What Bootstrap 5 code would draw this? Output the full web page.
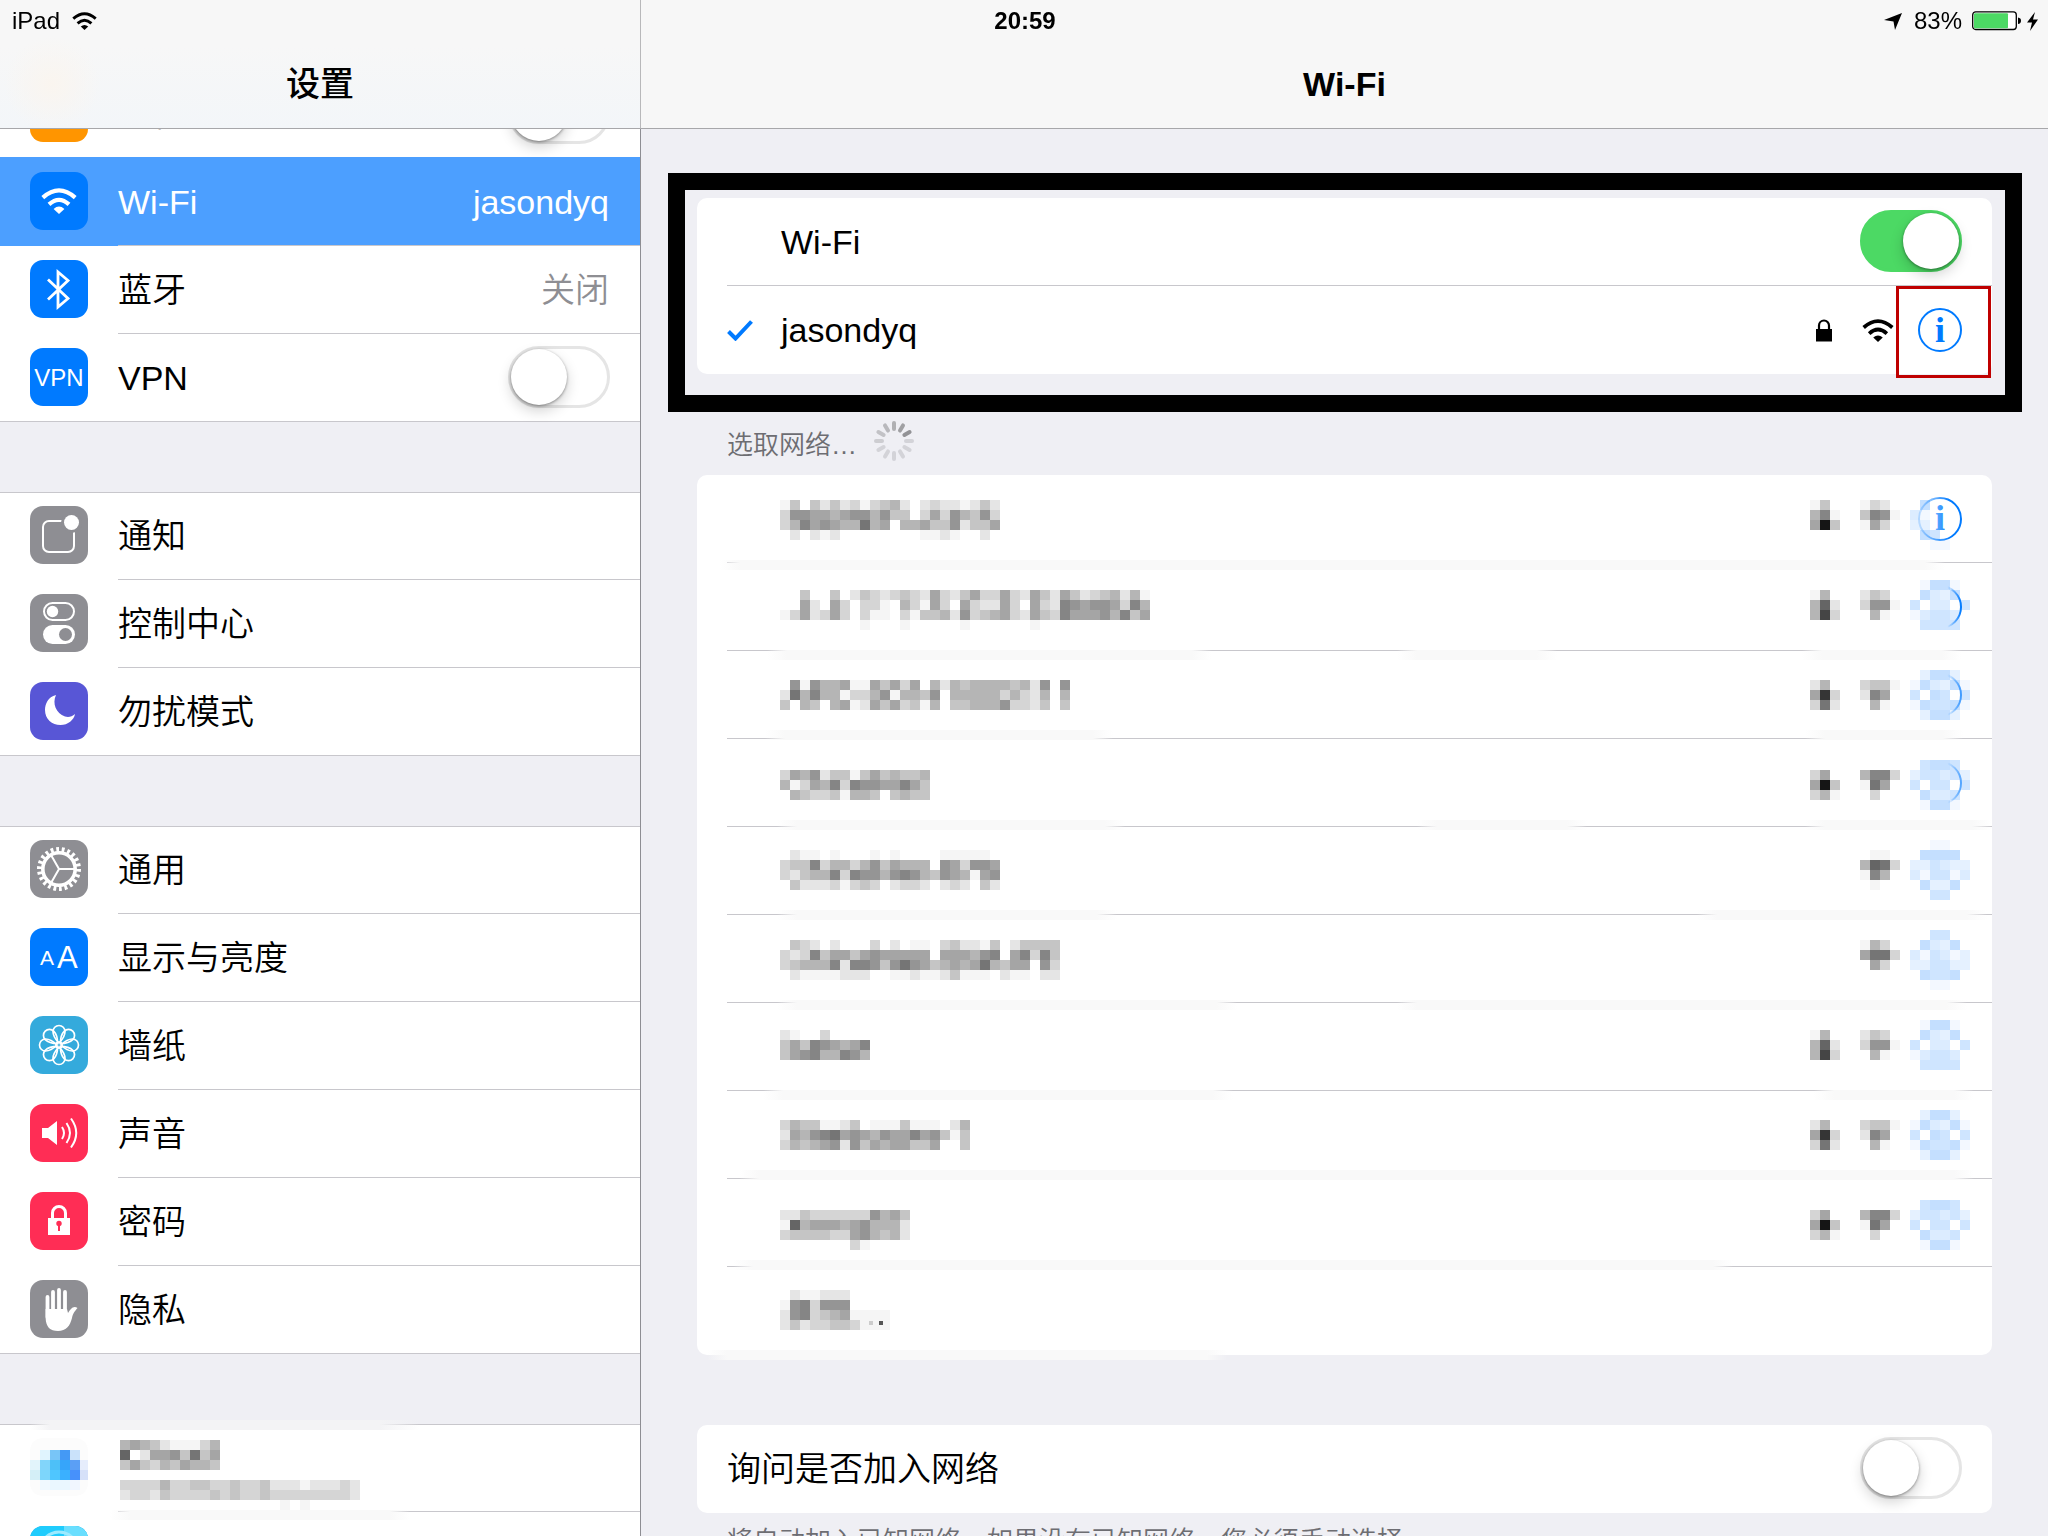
<!DOCTYPE html>
<html lang="zh-CN">
<head>
<meta charset="utf-8">
<meta name="viewport" content="width=device-width, initial-scale=1">
<title>设置 - Wi-Fi</title>
<link href="https://cdn.jsdelivr.net/npm/bootstrap@5.3.0/dist/css/bootstrap.min.css" rel="stylesheet">
<style>
:root{--line:#c8c7cc;--tint:#007aff;--pane:#efeff4}
body{background:var(--pane);color:#000;font-family:"Liberation Sans","Noto Sans CJK SC",sans-serif;font-size:34px;font-weight:350;line-height:40px}
svg{display:block;flex:none}
.statusbar{height:42px;font-size:24px;line-height:42px;padding:0 10px 0 12px;font-weight:400}
.statusbar>div{flex:1 1 0}
.clock{font-weight:700}
.charge{gap:6px}
.percent{padding:0 4px 0 6px}
.sidebar{flex:0 0 641px;border-right:1px solid #8e8e93}
.titlebar{flex:none;height:129px;padding-top:40px;border-bottom:1px solid #a7a7aa;background:#f7f7f7;z-index:2}
.titlebar h1{font-size:34px;line-height:40px;font-weight:700}
.sidebar .titlebar{margin-right:-1px;border-right:1px solid #b8b8ba;background:radial-gradient(circle at 52px 84px,#faf5ef 0,rgba(250,245,239,0) 48px),linear-gradient(#f7f7f7 45px,#f3f6f9)}
.sidebar h1{font-weight:500}
.groups{margin-top:-59px;gap:70px}
.group{background:#fff;list-style:none;margin:0;padding:0;border-top:1px solid var(--line)}
.group>li{position:relative;height:88px;display:flex;padding-left:30px}
.group>li:first-child{margin-top:-1px}
.group>li:last-child{border-bottom:1px solid var(--line)}
.tile{width:58px;height:58px;margin-top:14px;border-radius:13px;flex:none;background:#8e8e93;overflow:hidden}
.tile-blue{background:var(--tint)}
.tile-orange{background:#ff9500}
.tile-violet{background:#5856d6}
.tile-sky{background:#34aadc}
.tile-red{background:#ff2d55}
.tile-none{background:#fcfcfc}
.cell{flex:1 1 auto;display:flex;align-items:center;justify-content:space-between;margin-left:30px;padding-right:31px;border-bottom:1px solid var(--line);color:#000;text-decoration:none}
.group>li:last-child .cell{border-bottom:0}
.group>li.current::before{content:"";position:absolute;inset:-1px 0 0 0;background:#4c9fff}
.current>*{position:relative;color:#fff}
.quiet{color:#8e8e93}
.toggle{appearance:none;-webkit-appearance:none;position:relative;flex:none;width:102px;height:62px;margin:0 0 2px;border:3px solid #e5e5e5;border-radius:31px;background:#fff}
.toggle::before{content:"";position:absolute;left:0;top:0;width:56px;height:56px;border-radius:50%;background:#fff;box-shadow:0 1px 3px rgba(0,0,0,.4),0 6px 14px rgba(0,0,0,.18)}
.toggle:checked{background:#4cd964;border-color:#4cd964}
.toggle:checked::before{left:40px}
.sidebar .toggle{margin-right:-1px}
.detail{padding:44px 56px 0}
.framed{border:17px solid #000;padding:8px 13px 21px 12px;margin:0 -30px 0 -29px}
.panel{background:#fff;border-radius:10px;list-style:none;margin:0;padding:0}
.panel>li{position:relative;height:88px;padding-left:30px}
.line{height:88px;display:flex;align-items:center;padding-right:30px;border-bottom:1px solid var(--line)}
.panel>li:last-child .line{border-bottom:0}
.check-slot{width:54px}
.info{position:relative;width:44px;height:44px;padding:0;margin-left:24px;border:2px solid var(--tint);border-radius:50%;background:none;color:var(--tint);font:700 36px/38px "Liberation Serif",serif}
.callout{position:absolute;left:-24px;right:-31px;top:-24px;bottom:-28px;border:3px solid #bf0000;pointer-events:none}
.lock{margin-right:30px}
.section-head{height:63px;padding:0 0 14px 30px;gap:17px;color:#6d6d72}
.section-head h2{font-size:26px;line-height:32px;font-weight:350;margin:0}
.networks .line{padding-right:22px}
.networks .mosaic-name{margin-left:53px}
.join{margin-top:70px}
.foot{margin:12px 30px 0;font-size:26px;line-height:32px;color:#6d6d72}
.smudge{position:absolute;height:10px;background:linear-gradient(90deg,rgba(249,249,249,0),#f9f9f9 20px,#f9f9f9 calc(100% - 20px),rgba(249,249,249,0));pointer-events:none}
.smudge-top{left:30px;top:-4px;width:390px;background:linear-gradient(90deg,rgba(243,243,245,0),#f3f3f5 20px,#f3f3f5 calc(100% - 40px),rgba(243,243,245,0))}
.smudge-end{left:110px;top:86px;width:300px}
.plain{border:0;background:none;padding:0}
</style>
</head>
<body class="vh-100 overflow-hidden">
<svg width="0" height="0" class="position-absolute" aria-hidden="true">
  <symbol id="wifi" viewBox="0 0 36 26"><path d="M1.8 9.6Q18-4.8 34.2 9.6M8 16.4Q18 7.4 28 16.4" fill="none" stroke="currentColor" stroke-width="4.2"/><path d="M12.6 21Q18 16.200 23.400 21L18 26z" fill="currentColor"/></symbol>
  <linearGradient id="fade"><stop offset=".35" stop-color="#007aff" stop-opacity="0"/><stop offset="1" stop-color="#007aff"/></linearGradient>
  <linearGradient id="fade2" gradientUnits="userSpaceOnUse" x1="10" y1="0" x2="40" y2="0"><stop offset="0" stop-color="#007aff" stop-opacity=".2"/><stop offset="1" stop-color="#007aff"/></linearGradient>
</svg>

<div class="statusbar fixed-top d-flex">
  <div class="d-flex align-items-center gap-2"><span>iPad</span><svg class="ms-1" width="25" height="18"><use href="#wifi"/></svg></div>
  <div class="clock text-center">20:59</div>
  <div class="charge d-flex align-items-center justify-content-end">
    <svg width="18" height="17" viewBox="0 0 18 17"><path d="M18 0L11 17 9.500 8.500 0 7z"/></svg>
    <span class="percent">83%</span>
    <svg width="49" height="20" viewBox="0 0 49 20"><rect x=".7" y=".9" width="43.600" height="17.600" rx="3" fill="#fff" stroke="#000" stroke-width="1.300"/><rect x="2" y="2.200" width="34" height="15" rx="1" fill="#4cd964"/><path d="M46 6.500q3 .5 3 3.300t-3 3.300z"/></svg>
    <svg width="11" height="19" viewBox="0 0 11 19"><path d="M8 0L0 10.500H5L3 19 11 7.500H6z"/></svg>
  </div>
</div>

<div class="d-flex h-100">
  <nav class="sidebar d-flex flex-column" aria-label="设置">
    <header class="titlebar d-flex align-items-center justify-content-center"><h1 class="m-0">设置</h1></header>
    <div class="groups d-flex flex-column">
      <ul class="group">
        <li><span class="tile tile-orange"><svg width="58" height="58"><path d="M48 27q0-3-5-3H34L24 10h-4l5 14h-8l-4-5h-3l2 8-2 8h3l4-5h8l-5 15h4l10-15h9q5 0 5-3z" fill="#fff"/></svg></span>
          <div class="cell"><label for="air">飞行模式</label><input class="toggle" type="checkbox" role="switch" id="air"></div></li>
        <li class="current"><span class="tile tile-blue d-flex align-items-center justify-content-center"><svg width="36" height="26"><use href="#wifi"/></svg></span>
          <a class="cell" href="#" aria-current="page"><span>Wi-Fi</span><span>jasondyq</span></a></li>
        <li><span class="tile tile-blue"><svg width="58" height="58"><path d="M18 19.500L38 38.500 28 47V12L38 20.500 18 39.500" fill="none" stroke="#fff" stroke-width="2.800"/></svg></span>
          <a class="cell" href="#"><span>蓝牙</span><span class="quiet">关闭</span></a></li>
        <li><span class="tile tile-blue"><svg width="58" height="58"><text x="29" y="38" font-size="24" text-anchor="middle" fill="#fff">VPN</text></svg></span>
          <div class="cell"><label for="vpn">VPN</label><input class="toggle" type="checkbox" role="switch" id="vpn"></div></li>
      </ul>
      <ul class="group">
        <li><span class="tile"><svg width="58" height="58"><rect x="13" y="15" width="31" height="31" rx="6" fill="none" stroke="#fff" stroke-width="2"/><circle cx="41.500" cy="16.500" r="10.500" fill="#8e8e93"/><circle cx="41.500" cy="16.500" r="7.500" fill="#fff"/></svg></span><a class="cell" href="#">通知</a></li>
        <li><span class="tile"><svg width="58" height="58"><rect x="14" y="9" width="30" height="17" rx="8.500" fill="none" stroke="#fff" stroke-width="2"/><circle cx="22.500" cy="17.500" r="5.700" fill="#fff"/><rect x="13" y="31" width="32" height="19" rx="9.500" fill="#fff"/><circle cx="35.500" cy="40.500" r="6.500" fill="#8e8e93"/></svg></span><a class="cell" href="#">控制中心</a></li>
        <li><span class="tile tile-violet"><svg width="58" height="58"><path d="M26 13C18 15 15 22 15 28c0 9 7 15 15.500 15C38 43 44 38 45 32c-3 3-7 3.500-10 2.500-9-3-13-13-9-21.500z" fill="#fff"/></svg></span><a class="cell" href="#">勿扰模式</a></li>
      </ul>
      <ul class="group">
        <li><span class="tile"><svg width="58" height="58" fill="none" stroke="#fff"><circle cx="29" cy="29" r="19.500" stroke-width="5" pathLength="44" stroke-dasharray="1"/><circle cx="29" cy="29" r="16.200" stroke-width="3.600"/><path d="M29 29H45M29 29L21 15M29 29L21 43" stroke-width="2"/></svg></span><a class="cell" href="#">通用</a></li>
        <li><span class="tile tile-blue"><svg width="58" height="58" fill="#fff"><text x="10" y="37" font-size="21">A</text><text x="27" y="40" font-size="31">A</text></svg></span><a class="cell" href="#">显示与亮度</a></li>
        <li><span class="tile tile-sky"><svg width="58" height="58" fill="none" stroke="#fff" stroke-width="1.700"><path id="petal" d="M29 27C25 23 23 19 23 15.500a6 6 0 0 1 12 0C35 19 33 23 29 27z"/><use href="#petal" transform="rotate(45 29 29)"/><use href="#petal" transform="rotate(90 29 29)"/><use href="#petal" transform="rotate(135 29 29)"/><use href="#petal" transform="rotate(180 29 29)"/><use href="#petal" transform="rotate(225 29 29)"/><use href="#petal" transform="rotate(270 29 29)"/><use href="#petal" transform="rotate(315 29 29)"/><circle cx="29" cy="29" r="3"/></svg></span><a class="cell" href="#">墙纸</a></li>
        <li><span class="tile tile-red"><svg width="58" height="58"><path d="M12 24h6l9-7v24l-9-7h-6z" fill="#fff"/><path d="M32 23q4 6 0 12M36.500 19q7 10 0 20M41 14.500q10.500 14.500 0 29" fill="none" stroke="#fff" stroke-width="2"/></svg></span><a class="cell" href="#">声音</a></li>
        <li><span class="tile tile-red"><svg width="58" height="58"><path d="M22.500 27v-6a6.500 6.500 0 0 1 13 0v6" fill="none" stroke="#fff" stroke-width="3"/><rect x="18" y="26" width="22" height="17" fill="#fff"/><circle cx="29" cy="31.500" r="2.700" fill="#ff2d55"/><path d="M29 32v7" stroke="#ff2d55" stroke-width="2"/></svg></span><a class="cell" href="#">密码</a></li>
        <li><span class="tile"><svg width="58" height="58"><path d="M17.500 17v20M23 12v20M29 10v20M35 12v20" stroke="#fff" stroke-width="3.800" stroke-linecap="round"/><path d="M15.600 29V38C16 47 20 51 28 51c8 0 12-5 14-13 1-5 3-7 5.500-10-4-3-7 1-9.500 5l-1-4z" fill="#fff"/></svg></span><a class="cell" href="#">隐私</a></li>
      </ul>
      <ul class="group">
        <li><span class="tile tile-none"><svg width="58" height="58" id="cloud" shape-rendering="crispEdges"></svg></span>
          <a class="cell" href="#" aria-label="帐户"><svg width="250" height="88" id="account" shape-rendering="crispEdges"></svg></a>
          <span class="smudge smudge-top"></span><span class="smudge smudge-end"></span></li>
        <li><span class="tile tile-sky"><svg width="58" height="58"><rect width="58" height="58" fill="#1fccfd"/><path d="M34 0h24v10H34z" fill="#69defe"/><circle cx="29" cy="25" r="19" fill="none" stroke="#9ceaff" stroke-width="3"/></svg></span>
          <a class="cell" href="#" aria-label="商店"></a></li>
      </ul>
    </div>
  </nav>

  <main class="flex-fill d-flex flex-column">
    <header class="titlebar d-flex align-items-center justify-content-center"><h1 class="m-0">Wi-Fi</h1></header>
    <div class="detail">
      <div class="framed">
        <ul class="panel">
          <li><div class="line"><span class="check-slot"></span><label for="wifiOn" class="flex-fill">Wi-Fi</label><input class="toggle" type="checkbox" role="switch" id="wifiOn" checked></div></li>
          <li><div class="line"><span class="check-slot"><svg width="26" height="21" viewBox="0 0 26 21"><path d="M1.500 11.500L8.500 18.500 24.500 1.500" fill="none" stroke="#007aff" stroke-width="4"/></svg></span><span class="flex-fill">jasondyq</span>
            <div class="d-flex align-items-center">
              <svg class="lock" width="16" height="23" viewBox="0 0 16 23"><path d="M3 10V6.500a5 5 0 0 1 10 0V10" fill="none" stroke="#000" stroke-width="2.200"/><path d="M0 10h16v12.500H0z"/></svg>
              <svg width="32" height="23"><use href="#wifi"/></svg>
              <button class="info" type="button">i<span class="callout"></span></button>
            </div></div></li>
        </ul>
      </div>
      <div class="section-head d-flex align-items-end"><h2>选取网络…</h2><svg id="spin" width="40" height="40" viewBox="-20 -20 40 40" stroke-width="4" stroke-linecap="round"></svg></div>
      <ul class="panel networks" id="networks"></ul>
      <ul class="panel join">
        <li><div class="line"><label for="ask" class="flex-fill">询问是否加入网络</label><input class="toggle" type="checkbox" role="switch" id="ask"></div></li>
      </ul>
      <p class="foot text-nowrap">将自动加入已知网络。如果没有已知网络，您必须手动选择。</p>
    </div>
  </main>
</div>

<script src="https://cdn.jsdelivr.net/npm/bootstrap@5.3.0/dist/js/bootstrap.bundle.min.js"></script>
<script>
// Each character is one 10px cell: a hex grey level, or "." for an empty cell.
const grey = c => { const v = parseInt(c, 16) * 16 + 5; return `rgb(${v},${v},${v})`; };
const blues = {a:'#c4dfff', b:'#cfe5ff', c:'#dcecff', d:'#e5f1ff', e:'#f3f8ff'};
function cells(rows, top, paint, left = 0) {
  return rows.map((r, y) => [...r].map((c, x) => c === '.' ? '' :
    `<rect x="${left + x * 10}" y="${top + y * 10}" width="10" height="10" fill="${paint(c)}"/>`).join('')).join('');
}
const svg = (w, body, cls = '') => `<svg class="${cls}" width="${w}" height="88" shape-rendering="crispEdges">${body}</svg>`;

const lockA = ['fb.', 'b6e', 'b4d'], lockB = ['eb.', 'a3d', 'd7e'], lockC = ['da.', 'a1c', 'dbf'];
const wifiA = ['ecd.', 'd99f', '.bf.'], wifiB = ['dccf', 'e8a.', '.bf.'], wifiC = ['b88d', 'f7a.', '.d..'];
const infoA = ['.eaae.', '.acda.', 'b.cc.b', 'ecbbc.', '.bbbb.'];
const infoB = ['.daad.', 'eacdae', 'b.ab.b', 'eabbae', '.daad.'];
const infoC = ['.baab.', 'dbbcbd', 'b.bb.b', '.accb.', '.eaae.'];
const arc = o => `<path d="M30 23a21 21 0 0 1 0 42" fill="none" stroke="url(#fade)" stroke-opacity="${o}" stroke-width="2" shape-rendering="auto"/>`;
const nets = [
  {off:25, name:['fc.cecedfdcbe.edeefece','d99aaba99b9cc.dad9bc9d','db8a9abb7ba.bbacc9ecca','.e.efe........ffef..e.'],
   lock:['fc.','b8f','a1c'], wifi:['fde.','c89f','fad.'], info:['.a....','ce....','dd....','.ab...','..ee..'], full:true, bars:[[23,1225,85]]},
  {off:27, name:['..c..c.ecdedcdeadecaddadeaceacedcbebf','..ae.ad.ddf.bdfad.adeead.ade89a99ad8b','fdaedad.dff.dfccbe9dcbadeacd8aaa9b8ca','........f...f.....f......f...........'],
   lock:lockA, wifi:wifiA, info:infoA, arc:1, bars:[[70,445,87],[700,160,87],[1105,160,87]]},
  {off:29, name:['.9f9bbaffacada.bebcbbbbcbe9.9','e7b8bbfddb9fbbc9.bbbbbdbdeb.b','c.bc.bafeacadcfb.ccbbb9ddec.c'],
   lock:lockB, wifi:wifiB, info:infoB, arc:.7, bars:[[68,348,79],[1108,158,79]]},
  {off:31, name:['dab9eccfcacbccb','bfdab8d899aa8ac','.bcddcfbbc.cbcc'],
   lock:lockC, wifi:wifiC, info:infoC, arc:.6, bars:[[80,348,81],[720,170,81],[1108,187,81]]},
  {off:23, name:['.eff.f...f.f....fffff.','dcc8dbbdb9cabbb.9ad99a','decbb8d899b989bc9abfa9','.ceeedfdcd.edde.ede.ce'],
   wifi:['.ff.','b67d','f8b.','.f..'], info:['..ee..','.aaaa.','ddbcdd','cebbec','.adda.','..bb..'], bars:[[80,340,83],[1000,290,83]]},
  {off:25, name:['.cde.e...d.e.ff.dceefc.ecccc','ded8caaca9aaaaa.aaab98.a8d8c','dcbbb8e889c979acbaba7bcaa.9d','.effffeee..ffeffecfff.eff.ee'],
   wifi:['fbd.','a77d','.ad.'], info:['..bb..','.acda.','cebced','ddbbdd','.abba.','..ee..'], bars:[[80,460,85],[700,570,85]]},
  {off:27, name:['ef..d....','cac89aba8','ca98bb89b'], lock:lockA, wifi:wifiA, info:infoA, bars:[[66,470,87],[1117,160,87]]},
  {off:29, name:['dbccffec.fffcfff.eb','eab987a9ab9aa8a9cfc','dbcba9e9cabaacca..c'], lock:lockB, wifi:wifiB, info:infoB, bars:[[42,1235,79]]},
  {off:31, name:['eecdddddd9bac','f6baaaba9bbbe','dccccdda9bcbe','.......df....'], lock:lockC, wifi:wifiC, info:infoC, bars:[[36,1000,81]]},
  {off:23, name:['.effeee','f98d999','e98dcbaffff','eceddccdfff'], dots:true, bars:[[10,520,83]]}
];
document.getElementById('networks').innerHTML = nets.map(n => {
  const w = Math.max(...n.name.map(r => r.length)) * 10;
  const dots = n.dots ? '<path d="M89 54h4v4h-4z" fill="#ccc"/><path d="M99 54h4v4h-4z" fill="#555"/>' : '';
  const full = n.full ? '<g shape-rendering="auto"><circle cx="30" cy="44" r="21" fill="none" stroke="url(#fade2)" stroke-width="2"/><text x="30" y="55" text-anchor="middle" font-family="Liberation Serif, serif" font-weight="700" font-size="36" fill="url(#fade2)">i</text></g>' : '';
  const icons = n.info ? `<div class="d-flex ms-auto">
    ${n.lock ? svg(30, cells(n.lock, n.off, grey)) : ''}
    ${svg(60, cells(n.wifi, n.off, grey, 20))}
    <button type="button" class="plain" aria-label="网络信息">${svg(70, '<g transform="translate(10)">' + cells(n.info, n.off - (n.full ? 0 : 10), c => blues[c]) + full + (n.arc ? arc(n.arc) : '') + '</g>')}</button></div>` : '';
  const bars = n.bars.map(b => `<span class="smudge" style="left:${b[0]}px;width:${b[1]}px;top:${b[2]}px"></span>`).join('');
  return `<li><div class="line">${svg(Math.max(w, 110), cells(n.name, n.off, grey) + dots, 'mosaic-name')}${icons}</div>${bars}</li>`;
}).join('');

document.getElementById('account').innerHTML =
  cells(['babcefffdb', '6.eaa9c7ca', 'cacdbcabbc'], 16, grey, 2) +
  cells(['ddddbddccddcddceeefeeede', 'eddecddddcdcddcdddddddde', '................f.f.....'], 56, grey, 2);

const cloud = [['','#e0f4fe','#78c5f7','#4499f5','#cae2fa',''], ['#e2f4fb','#82d5fa','#4dc0f8','#36a5fa','#5b9ff5','#e6edfc'],
  ['#d4eff7','#7dd6fb','#4fc6ff','#3ab0ff','#4791fb','#d6e1f9'], ['','#f0f9ff','#eaf7ff','#eaf7ff','#f1f6ff','']];
document.getElementById('cloud').innerHTML = cloud.map((r, y) => r.map((c, x) => c ?
  `<rect x="${x * 10}" y="${12 + y * 10}" width="10" height="10" fill="${c}"/>` : '').join('')).join('');

const shades = ['#b0b0b3','#a0a0a3','#929296','#d3d3d8','#d3d3d8','#d3d3d8','#d3d3d8','#d3d3d8','#d3d3d8','#cdcdd1','#c2c2c6','#b8b8bc'];
document.getElementById('spin').innerHTML = shades.map((c, i) => `<path d="M0-12V-18" stroke="${c}" transform="rotate(${i * 30})"/>`).join('');
</script>
</body>
</html>
